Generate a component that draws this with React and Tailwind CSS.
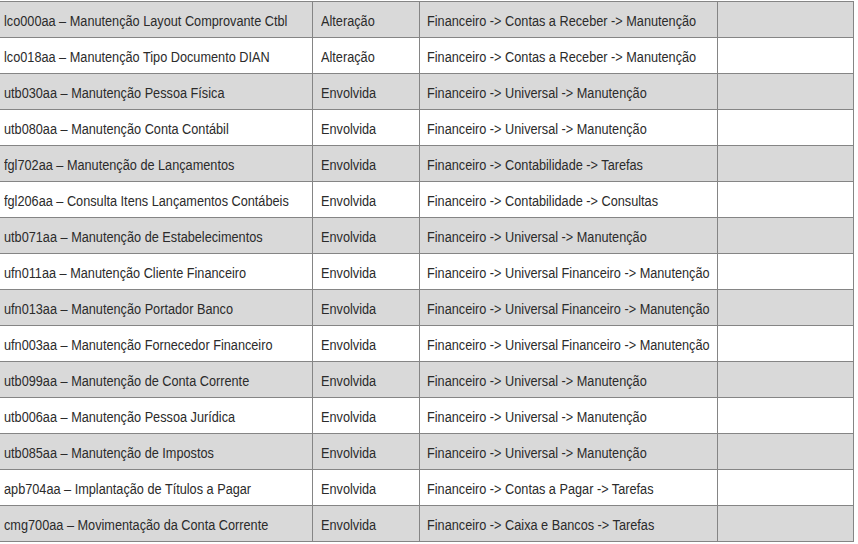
const rows = [
  ['lco000aa – Manutenção Layout Comprovante Ctbl', 'Alteração', 'Financeiro -> Contas a Receber -> Manutenção'],
  ['lco018aa – Manutenção Tipo Documento DIAN', 'Alteração', 'Financeiro -> Contas a Receber -> Manutenção'],
  ['utb030aa – Manutenção Pessoa Física', 'Envolvida', 'Financeiro -> Universal -> Manutenção'],
  ['utb080aa – Manutenção Conta Contábil', 'Envolvida', 'Financeiro -> Universal -> Manutenção'],
  ['fgl702aa – Manutenção de Lançamentos', 'Envolvida', 'Financeiro -> Contabilidade -> Tarefas'],
  ['fgl206aa – Consulta Itens Lançamentos Contábeis', 'Envolvida', 'Financeiro -> Contabilidade -> Consultas'],
  ['utb071aa – Manutenção de Estabelecimentos', 'Envolvida', 'Financeiro -> Universal -> Manutenção'],
  ['ufn011aa – Manutenção Cliente Financeiro', 'Envolvida', 'Financeiro -> Universal Financeiro -> Manutenção'],
  ['ufn013aa – Manutenção Portador Banco', 'Envolvida', 'Financeiro -> Universal Financeiro -> Manutenção'],
  ['ufn003aa – Manutenção Fornecedor Financeiro', 'Envolvida', 'Financeiro -> Universal Financeiro -> Manutenção'],
  ['utb099aa – Manutenção de Conta Corrente', 'Envolvida', 'Financeiro -> Universal -> Manutenção'],
  ['utb006aa – Manutenção Pessoa Jurídica', 'Envolvida', 'Financeiro -> Universal -> Manutenção'],
  ['utb085aa – Manutenção de Impostos', 'Envolvida', 'Financeiro -> Universal -> Manutenção'],
  ['apb704aa – Implantação de Títulos a Pagar', 'Envolvida', 'Financeiro -> Contas a Pagar -> Tarefas'],
  ['cmg700aa – Movimentação da Conta Corrente', 'Envolvida', 'Financeiro -> Caixa e Bancos -> Tarefas'],
]

// the source font is tall and narrow, so squeeze Arial-width text horizontally
function Cell({ children }) {
  return <span className="inline-block origin-left scale-x-[0.82] whitespace-nowrap">{children}</span>
}

export default function App() {
  return (
    <div className="h-[544px] w-[858px] bg-white pt-px font-['Liberation_Sans',Arial,sans-serif] text-[15.5px] text-[#2b2b2b]">
      <div className="w-[854px] border-b border-[#858585]">
        {rows.map(([program, kind, path], i) => (
          <div
            key={program}
            className={`grid h-9 grid-cols-[312px_107px_298px_137px] border-t border-[#858585] ${i % 2 === 0 ? 'bg-[#d9d9d9]' : 'bg-white'}`}
          >
            <div className="flex items-center overflow-hidden pl-1 pt-[2px]"><Cell>{program}</Cell></div>
            <div className="flex items-center overflow-hidden border-l border-[#858585] pl-[8px] pt-[2px]"><Cell>{kind}</Cell></div>
            <div className="flex items-center overflow-hidden border-l border-[#858585] pl-[7px] pt-[2px]"><Cell>{path}</Cell></div>
            <div className="border-x border-[#858585]" />
          </div>
        ))}
      </div>
    </div>
  )
}
